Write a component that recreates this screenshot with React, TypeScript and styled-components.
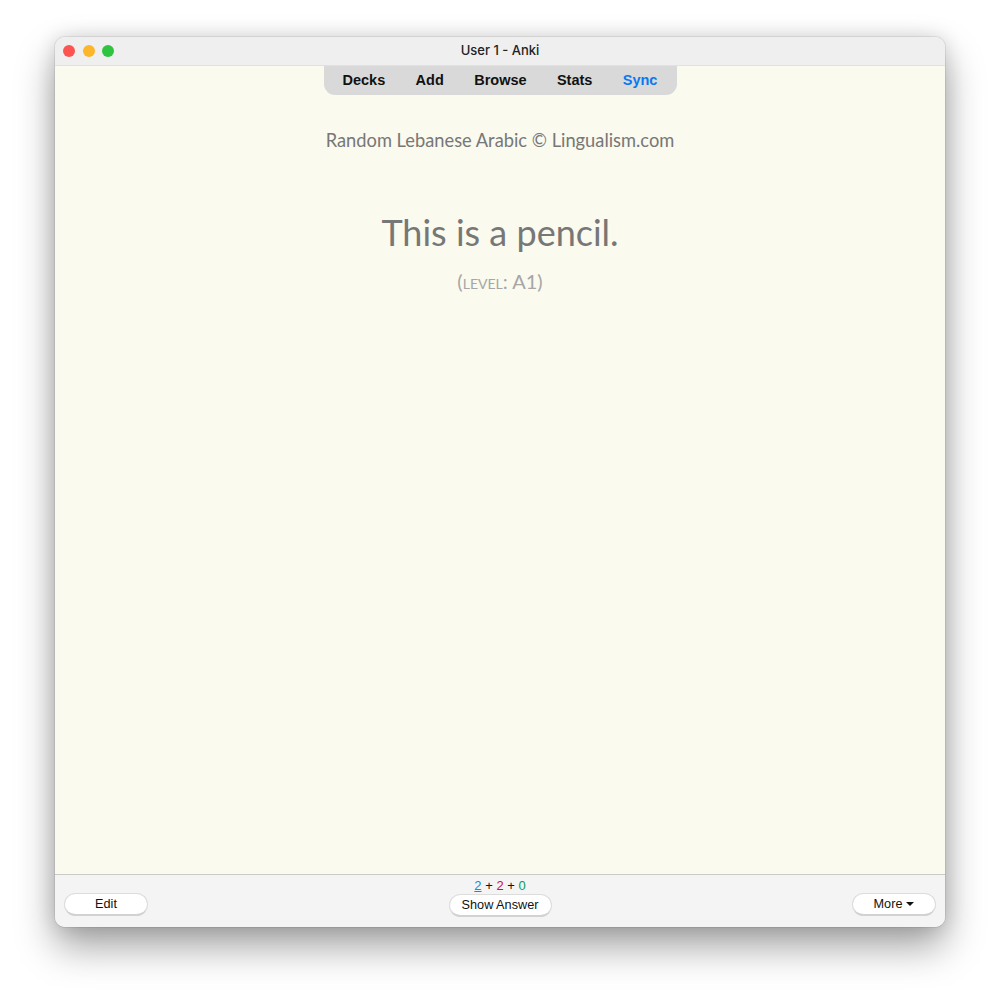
import React from "react";
import styled, { createGlobalStyle } from "styled-components";

const GlobalStyle = createGlobalStyle`
  html, body {
    margin: 0;
    padding: 0;
    background: #ffffff;
  }
`;

const sans = `"Liberation Sans", Arial, sans-serif`;
const cardFont = `Lato, "Noto Sans", sans-serif`;

export default function App() {
  return (
    <>
      <GlobalStyle />
      <Page>
        <Window>
          <TitleBar>
            <Lights>
              <Light color="#fb5451" />
              <Light color="#fdb52a" />
              <Light color="#2ec440" />
            </Lights>
            User 1 - Anki
          </TitleBar>
          <Main>
            <Menu>
              <MenuItem>Decks</MenuItem>
              <MenuItem>Add</MenuItem>
              <MenuItem>Browse</MenuItem>
              <MenuItem>Stats</MenuItem>
              <MenuItem $active>Sync</MenuItem>
            </Menu>
            <Source>Random Lebanese Arabic © Lingualism.com</Source>
            <Question>This is a pencil.</Question>
            <Level>
              (<SmallCaps>level</SmallCaps>: A1)
            </Level>
          </Main>
          <BottomBar>
            <SideButton>Edit</SideButton>
            <Middle>
              <Counts>
                <Count color="#2f7de1" $underline>2</Count> + <Count color="#d3122c">2</Count> +{" "}
                <Count color="#0c9c50">0</Count>
              </Counts>
              <AnswerButton>Show Answer</AnswerButton>
            </Middle>
            <SideButton>
              More
              <Caret viewBox="0 0 8 4" aria-hidden="true">
                <path d="M0 0h8L4 4z" fill="#111" />
              </Caret>
            </SideButton>
          </BottomBar>
        </Window>
      </Page>
    </>
  );
}

const Page = styled.div`
  width: 1000px;
  height: 1000px;
  box-sizing: border-box;
  padding: 37px 55px 73px;
  overflow: hidden;
`;

const Window = styled.div`
  height: 890px;
  display: flex;
  flex-direction: column;
  border-radius: 10px;
  overflow: hidden;
  background: #f4f4f4;
  box-shadow: 0 0 0 1px rgba(0, 0, 0, 0.07), 0 20px 38px rgba(0, 0, 0, 0.36),
    0 0 20px rgba(0, 0, 0, 0.14);
`;

const TitleBar = styled.div`
  height: 29px;
  flex: none;
  box-sizing: border-box;
  position: relative;
  display: flex;
  align-items: center;
  justify-content: center;
  padding-bottom: 1px;
  background: #efefef;
  border-bottom: 1px solid #e2e2dc;
  font: 500 13px/1 Inter, ${sans};
  color: #222;
`;

const Lights = styled.div`
  position: absolute;
  left: 8px;
  top: 8px;
  display: flex;
  gap: 7.5px;
`;

const Light = styled.span<{ color: string }>`
  width: 12px;
  height: 12px;
  border-radius: 50%;
  background: ${(props) => props.color};
`;

const Main = styled.div`
  flex: 1;
  display: flex;
  flex-direction: column;
  align-items: center;
  background: #fafaee;
`;

const Menu = styled.div`
  width: 353px;
  height: 29px;
  box-sizing: border-box;
  display: flex;
  align-items: center;
  justify-content: space-between;
  padding: 0 19px;
  background: #d9d9d9;
  border-radius: 0 0 11px 11px;
`;

const MenuItem = styled.span<{ $active?: boolean }>`
  font: 700 14.5px/1 ${sans};
  color: ${(props) => (props.$active ? "#0a78f2" : "#111")};
`;

const Source = styled.div`
  margin-top: 34px;
  font: 400 18.3px/22px ${cardFont};
  color: #777777;
`;

const Question = styled.div`
  margin-top: 59px;
  font: 400 36px/44px ${cardFont};
  color: #777777;
`;

const Level = styled.div`
  margin-top: 14px;
  font: 400 20px/26px ${cardFont};
  color: #a6a6a6;
`;

const SmallCaps = styled.span`
  font-variant: small-caps;
`;

const BottomBar = styled.div`
  height: 53px;
  flex: none;
  box-sizing: border-box;
  display: flex;
  align-items: flex-start;
  justify-content: space-between;
  padding: 3px 9px 0;
  background: #f4f4f4;
  border-top: 1px solid #c9c9c5;
`;

const Middle = styled.div`
  display: flex;
  flex-direction: column;
  align-items: center;
  gap: 1px;
`;

const Counts = styled.div`
  font: 400 13px/15px ${sans};
  color: #111;
`;

const Count = styled.span<{ color: string; $underline?: boolean }>`
  color: ${(props) => props.color};
  text-decoration: ${(props) => (props.$underline ? "underline" : "none")};
`;

const BottomButton = styled.button`
  height: 23px;
  box-sizing: border-box;
  display: flex;
  align-items: center;
  justify-content: center;
  gap: 4px;
  padding: 0;
  background: #ffffff;
  border: 1px solid #dcdcdc;
  border-bottom: 2px solid #d2d2d2;
  border-radius: 12px;
  font: 400 12.7px/1 ${sans};
  color: #111;
`;

const SideButton = styled(BottomButton)`
  width: 84px;
  margin-top: 15px;
`;

const AnswerButton = styled(BottomButton)`
  width: 103px;
`;

const Caret = styled.svg`
  width: 8px;
  height: 4px;
`;
